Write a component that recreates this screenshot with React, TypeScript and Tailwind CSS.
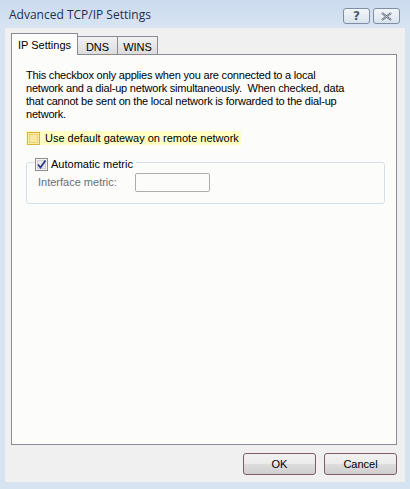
import React from 'react';

const font = { fontFamily: '"Liberation Sans", Arial, sans-serif' };

function Checkbox({ checked, hot }: { checked?: boolean; hot?: boolean }) {
  return (
    <span
      className={`flex h-[13px] w-[13px] shrink-0 items-center justify-center border ${
        hot ? 'border-[#d9b33a] bg-[#fbeaa8]' : 'border-[#8e8f8f] bg-[#f4f4f4]'
      }`}
    >
      <span
        className={`flex h-[9px] w-[9px] items-center justify-center ${
          hot ? 'bg-[#f8e7a4] border border-[#ecd37a]' : 'bg-[#e8e8e8] border border-[#d0d0d0]'
        }`}
      >
        {checked && (
          <svg width="9" height="9" viewBox="0 0 9 9" className="overflow-visible">
            <path d="M1 4.5 L3.5 7.5 L8.5 0.5" fill="none" stroke="#2c3a8c" strokeWidth="1.8" />
          </svg>
        )}
      </span>
    </span>
  );
}

function TitleButton({ children }: { children: React.ReactNode }) {
  return (
    <div className="flex h-[16px] w-[27px] items-center justify-center rounded-[3px] border border-[#7e8ea3] bg-gradient-to-b from-[#f3f6fa] to-[#d9e2ec]">
      {children}
    </div>
  );
}

function Button({ label }: { label: string }) {
  return (
    <button
      className="flex h-[22px] w-[73px] items-center justify-center rounded-[3px] border border-[#7d5d66] bg-[linear-gradient(#f2f2f2_0%,#ebebeb_50%,#dddddd_51%,#cfcfcf_100%)] text-[11px] text-black"
    >
      {label}
    </button>
  );
}

export default function App() {
  return (
    <div className="flex h-[489px] w-[410px] flex-col bg-[#d6e3f1] text-[11px] text-black" style={font}>
      {/* title bar */}
      <div className="flex h-[28px] items-center bg-gradient-to-b from-[#cbdbee] to-[#d8e4f2] pl-[9px] pr-[10px]">
        <span className="flex-1 pt-[2px] text-[12px] text-[#1e3050]" style={{ fontFamily: '"Open Sans", "Noto Sans", sans-serif' }}>
          Advanced TCP/IP Settings
        </span>
        <div className="flex gap-[3px] pt-[4px]">
          <TitleButton>
            <span className="text-[12px] font-bold leading-none text-[#4a5a6c]" style={{ fontFamily: '"DejaVu Sans", sans-serif' }}>?</span>
          </TitleButton>
          <TitleButton>
            <svg width="11" height="9" viewBox="0 0 11 9">
              <path d="M1 1 L10 8 M10 1 L1 8" stroke="#4a5a6c" strokeWidth="2" fill="none" />
              <path d="M1 1 L10 8 M10 1 L1 8" stroke="#eef2f7" strokeWidth="0.7" fill="none" />
            </svg>
          </TitleButton>
        </div>
      </div>

      {/* body */}
      <div className="mx-[5px] mb-[7px] flex flex-1 flex-col bg-[#f0f0f0] pl-[6px] pr-[8px] pt-[5px]">
        {/* tabs */}
        <div className="relative z-10 flex h-[21px] items-end">
          <div className="-mb-px flex h-[22px] w-[67px] items-start justify-center border border-b-0 border-[#898c95] bg-[#fcfcfb] pt-[3px]">
            IP Settings
          </div>
          <div className="flex h-[18px] w-[40px] items-start justify-center border border-l-0 border-b-0 border-[#898c95] bg-gradient-to-b from-[#f2f2f2] to-[#dcdcdc] pt-[2px]">
            DNS
          </div>
          <div className="flex h-[18px] w-[40px] items-start justify-center border border-l-0 border-b-0 border-[#898c95] bg-gradient-to-b from-[#f2f2f2] to-[#dcdcdc] pt-[2px]">
            WINS
          </div>
        </div>

        {/* panel */}
        <div className="flex h-[391px] flex-col border border-[#898c95] bg-[#fcfcfb] pl-[14px] pr-[11px] pt-[14px]">
          <div className="whitespace-nowrap leading-[13px] tracking-[-0.2px]">
            <div>This checkbox only applies when you are connected to a local</div>
            <div>network and a dial-up network simultaneously.&nbsp; When checked, data</div>
            <div>that cannot be sent on the local network is forwarded to the dial-up</div>
            <div>network.</div>
          </div>

          <div className="mt-[10px] flex">
            <div className="flex h-[14px] items-center gap-[5px] bg-[#ffffc3] pl-[1px] pr-[2px]">
              <Checkbox hot />
              <span>Use default gateway on remote network</span>
            </div>
          </div>

          {/* group box */}
          <div className="relative mt-[17px] h-[42px] rounded-[3px] border border-[#d5dfe5]">
            <div className="absolute -top-[7px] left-[8px] flex items-center gap-[3px] bg-[#fcfcfb] pr-[3px]">
              <Checkbox checked />
              <span>Automatic metric</span>
            </div>
            <div className="flex items-center pl-[11px] pt-[10px]">
              <span className="w-[97px] text-[#6d6d6d]">Interface metric:</span>
              <div className="h-[19px] w-[75px] rounded-[2px] border border-[#adadad] bg-[#fcfcfb]" />
            </div>
          </div>
        </div>

        {/* footer */}
        <div className="flex flex-1 items-start justify-end gap-[8px] pt-[8px]">
          <Button label="OK" />
          <Button label="Cancel" />
        </div>
      </div>
    </div>
  );
}
